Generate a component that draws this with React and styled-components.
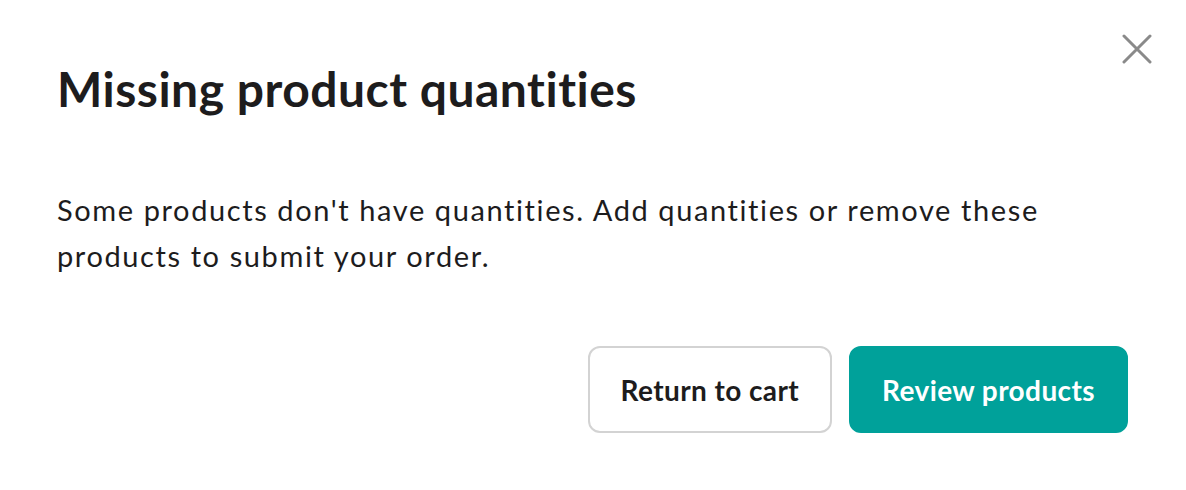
import React from "react";
import styled, { createGlobalStyle } from "styled-components";

const Global = createGlobalStyle`
  html, body { margin: 0; padding: 0; background: #ffffff; }
  body { font-family: Lato, "Noto Sans", sans-serif; font-variant-ligatures: none; }
`;

const Dialog = styled.div`
  position: relative;
  width: 1186px;
  height: 490px;
  box-sizing: border-box;
  padding: 60px 58px 0 57px;
  display: flex;
  flex-direction: column;
  background: #fff;
`;

const Title = styled.h1`
  margin: 0;
  font-size: 48px;
  font-weight: 700;
  line-height: 58px;
  letter-spacing: 0.5px;
  color: #1d1c1d;
`;

const Body = styled.p`
  margin: 69px 0 0;
  font-size: 29px;
  line-height: 46px;
  letter-spacing: 1.6px;
  color: #1d1c1d;
  max-width: 1040px;
`;

const Actions = styled.div`
  display: flex;
  justify-content: flex-end;
  gap: 17px;
  margin-top: 67px;
`;

const Button = styled.button`
  height: 87px;
  padding: 0 31px;
  border-radius: 12px;
  font-family: Lato, "Noto Sans", sans-serif;
  font-variant-ligatures: none;
  font-size: 28px;
  font-weight: 700;
  letter-spacing: 0.4px;
  cursor: pointer;
  border: 2px solid ${(p) => (p.$primary ? "#00a19a" : "#d3d3d3")};
  background: ${(p) => (p.$primary ? "#00a19a" : "#ffffff")};
  color: ${(p) => (p.$primary ? "#ffffff" : "#1d1c1d")};
`;

const Close = styled.button`
  position: absolute;
  top: 32px;
  right: 32px;
  width: 34px;
  height: 34px;
  padding: 0;
  border: 0;
  background: transparent;
  display: flex;
  align-items: center;
  justify-content: center;
  cursor: pointer;
`;

export default function App() {
  return (
    <>
      <Global />
      <Dialog>
        <Close aria-label="Close">
          <svg width="30" height="30" viewBox="0 0 30 30">
            <path d="M2 2 L28 28 M28 2 L2 28" stroke="#8a8a8a" strokeWidth="3" strokeLinecap="round" />
          </svg>
        </Close>
        <Title>Missing product quantities</Title>
        <Body>
          Some products don't have quantities. Add quantities or remove these products to submit your order.
        </Body>
        <Actions>
          <Button>Return to cart</Button>
          <Button $primary>Review products</Button>
        </Actions>
      </Dialog>
    </>
  );
}
